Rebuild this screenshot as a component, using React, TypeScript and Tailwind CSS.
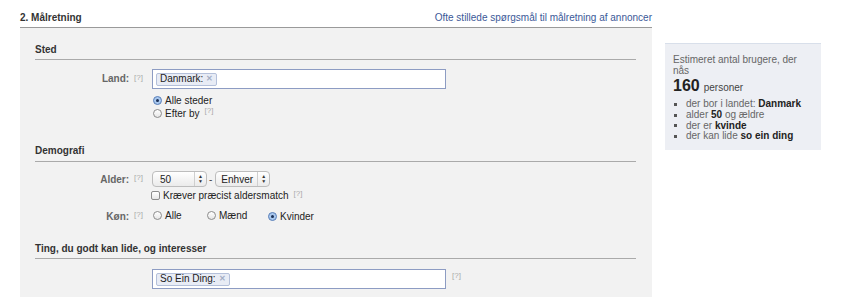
const font = { fontFamily: '"Liberation Sans", Arial, sans-serif' };

function Help({ className = "" }: { className?: string }) {
  return <span className={`text-[8px] text-[#aaa] ${className}`}>[?]</span>;
}

function Radio({ checked, label }: { checked?: boolean; label: string }) {
  return (
    <span className="inline-flex items-center gap-[3px]">
      <span
        className={`flex h-[9px] w-[9px] items-center justify-center rounded-full border ${
          checked ? "border-[#5a7fb8] bg-[#a9c8ee]" : "border-[#8c8c8c] bg-gradient-to-b from-white to-[#e6e6e6]"
        }`}
      >
        {checked && <span className="h-[3px] w-[3px] rounded-full bg-[#1a2f55]" />}
      </span>
      <span>{label}</span>
    </span>
  );
}

function Tag({ text }: { text: string }) {
  return (
    <span className="inline-flex h-[13px] items-center gap-[3px] rounded-[2px] border border-[#b4c0da] bg-[#e8ecf5] px-[3px] text-[10px] leading-none text-[#222]">
      {text}
      <span className="text-[8px] font-bold text-[#a3aec4]">✕</span>
    </span>
  );
}

function Select({ value, pad }: { value: string; pad: string }) {
  return (
    <span className="inline-flex h-[16px] w-[55px] items-center rounded-[4px] border border-[#bdbdbd] bg-gradient-to-b from-white to-[#ebebeb] text-[10px] text-[#222]">
      <span className={`flex-1 ${pad}`}>{value}</span>
      <span className="flex h-full w-[12px] flex-col items-center justify-center border-l border-[#cfcfcf] text-[5px] leading-[5px] text-[#333]">
        <span>▲</span>
        <span>▼</span>
      </span>
    </span>
  );
}

function SectionTitle({ children, className = "" }: { children: React.ReactNode; className?: string }) {
  return (
    <div className={`border-b border-[#aaa] pb-[3px] text-[10px] font-bold leading-[12px] text-[#333] ${className}`}>
      {children}
    </div>
  );
}

export default function App() {
  return (
    <div className="flex h-[297px] w-[858px] overflow-hidden bg-white text-[10px]" style={font}>
      <div className="ml-[20px] flex w-[632px] flex-col">
        <div className="mt-[12px] flex items-end justify-between border-b border-[#9a9a9a] pb-[3px] leading-[12px]">
          <span className="font-bold text-[#333]">2. Målretning</span>
          <span className="text-[#3b5998]">Ofte stillede spørgsmål til målretning af annoncer</span>
        </div>
        <div className="flex-1 bg-[#f2f2f2] pl-[15px] pr-[16px] pt-[16px] text-[#333]">
          <SectionTitle>Sted</SectionTitle>

          <div className="mt-[9px] flex">
            <div className="flex h-[20px] w-[117px] items-center justify-end pr-[9px] leading-[12px]">
              <span className="font-bold text-[#666]">Land:</span>
              <Help className="ml-[5px] -mt-[3px]" />
            </div>
            <div className="flex flex-col">
              <div className="flex h-[20px] w-[294px] items-center border border-[#8d9cc3] bg-white pl-[3px]">
                <Tag text="Danmark:" />
              </div>
              <div className="mt-[5px] flex flex-col pl-[1px] leading-[13px] text-[#222]">
                <Radio checked label="Alle steder" />
                <span className="inline-flex items-start">
                  <Radio label="Efter by" />
                  <Help className="ml-[5px] -mt-[3px]" />
                </span>
              </div>
            </div>
          </div>

          <SectionTitle className="mt-[25px] pb-[4px]">Demografi</SectionTitle>

          <div className="mt-[9px] flex items-center leading-[13px]">
            <div className="flex w-[117px] items-center justify-end pr-[9px]">
              <span className="font-bold text-[#666]">Alder:</span>
              <Help className="ml-[5px] -mt-[3px]" />
            </div>
            <Select value="50" pad="pl-[7px]" />
            <span className="ml-[2px] mr-[3px] text-[#444]">-</span>
            <Select value="Enhver" pad="pl-[5px]" />
          </div>

          <div className="mt-[2px] flex items-center pl-[116px] leading-[13px] text-[#222]">
            <span className="h-[9px] w-[9px] rounded-[2px] border border-[#8c8c8c] bg-gradient-to-b from-white to-[#e6e6e6]" />
            <span className="ml-[3px]">Kræver præcist aldersmatch</span>
            <Help className="ml-[5px] -mt-[5px]" />
          </div>

          <div className="mt-[7px] flex items-center leading-[13px] text-[#222]">
            <div className="flex w-[117px] items-center justify-end pr-[9px]">
              <span className="font-bold text-[#666]">Køn:</span>
              <Help className="ml-[5px] -mt-[3px]" />
            </div>
            <span className="w-[55px] pl-[1px]">
              <Radio label="Alle" />
            </span>
            <span className="w-[61px]">
              <Radio label="Mænd" />
            </span>
            <Radio checked label="Kvinder" />
          </div>

          <SectionTitle className="mt-[20px]">Ting, du godt kan lide, og interesser</SectionTitle>

          <div className="mt-[10px] flex items-start pl-[117px]">
            <div className="flex h-[20px] w-[294px] items-center border border-[#8d9cc3] bg-white pl-[3px]">
              <Tag text="So Ein Ding:" />
            </div>
            <Help className="ml-[6px] mt-[1px]" />
          </div>
        </div>
      </div>

      <div className="ml-[13px] mt-[43px] h-[107px] w-[156px] border-t border-[#d8dfea] bg-[#edeff4] pl-[8px] pr-[6px] pt-[10px] leading-[11px] text-[#666]">
        <div>Estimeret antal brugere, der nås</div>
        <div className="mt-[1px] flex items-baseline gap-[4px]">
          <span className="text-[16px] font-bold leading-[18px] text-[#222]">160</span>
          <span className="text-[#444]">personer</span>
        </div>
        <ul className="mt-[4px] flex flex-col leading-[10.75px]">
          {[
            ["der bor i landet: ", "Danmark"],
            ["alder ", "50", " og ældre"],
            ["der er ", "kvinde"],
            ["der kan lide ", "so ein ding"],
          ].map((it, i) => (
            <li key={i} className="flex items-center">
              <span className="ml-[1px] mr-[9px] h-[3px] w-[3px] bg-[#555]" />
              <span className="whitespace-nowrap">
                {it[0]}
                <b className="text-[#222]">{it[1]}</b>
                {it[2]}
              </span>
            </li>
          ))}
        </ul>
      </div>
    </div>
  );
}
